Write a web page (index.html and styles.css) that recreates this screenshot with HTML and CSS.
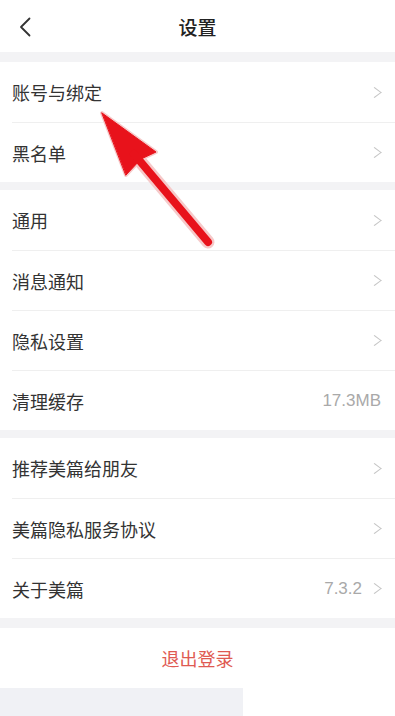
FILE: index.html
```html
<!DOCTYPE html>
<html lang="zh-CN">
<head>
<meta charset="utf-8">
<title>设置</title>
<link rel="stylesheet" href="styles.css">
</head>
<body>
<div class="page">
  <header class="topbar">
    <span class="back">
      <svg width="12" height="20" viewBox="0 0 12 20"><polyline points="10.5,1.5 2,10 10.5,18.5" fill="none" stroke="#333" stroke-width="1.8" stroke-linecap="round" stroke-linejoin="round"/></svg>
    </span>
    <h1 class="title">设置</h1>
  </header>

  <section class="group first">
    <div class="row"><span class="label">账号与绑定</span><span class="chev"></span></div>
    <div class="row"><span class="label">黑名单</span><span class="chev"></span></div>
  </section>

  <section class="group">
    <div class="row"><span class="label">通用</span><span class="chev"></span></div>
    <div class="row"><span class="label">消息通知</span><span class="chev"></span></div>
    <div class="row"><span class="label">隐私设置</span><span class="chev"></span></div>
    <div class="row"><span class="label">清理缓存</span><span class="value">17.3MB</span></div>
  </section>

  <section class="group">
    <div class="row"><span class="label">推荐美篇给朋友</span><span class="chev"></span></div>
    <div class="row"><span class="label">美篇隐私服务协议</span><span class="chev"></span></div>
    <div class="row"><span class="label">关于美篇</span><span class="value with-chev">7.3.2</span><span class="chev"></span></div>
  </section>

  <section class="group logout-group">
    <div class="logout">退出登录</div>
  </section>

  <footer class="bottom">
    <div class="bottom-bar"></div>
  </footer>

  <svg class="arrow" width="395" height="716" viewBox="0 0 395 716">
    <g stroke="#f6c9c9" stroke-width="4" stroke-linejoin="round" stroke-linecap="round" fill="#f6c9c9">
      <polygon points="102,113 156,152 141,159 126,175"/>
      <line x1="134" y1="154" x2="208" y2="242" stroke-width="13"/>
    </g>
    <g fill="#e8121b" stroke="#e8121b" stroke-linejoin="round" stroke-linecap="round">
      <polygon points="102,113 156,152 141,159 126,175" stroke-width="1"/>
      <line x1="134" y1="154" x2="208" y2="242" stroke-width="8"/>
    </g>
  </svg>
</div>
</body>
</html>
```

FILE: styles.css
```css
* { box-sizing: border-box; }

html, body {
  margin: 0;
  padding: 0;
}

body {
  background: #f3f3f5;
  font-family: "Noto Sans CJK SC", "Noto Sans", sans-serif;
  color: #333;
}

.page {
  position: relative;
  width: 395px;
  height: 716px;
  overflow: hidden;
  background: #f3f3f5;
}

.topbar {
  height: 52px;
  background: #fff;
  display: flex;
  align-items: center;
  justify-content: center;
  position: relative;
}

.back {
  position: absolute;
  left: 19px;
  top: 17px;
  display: flex;
}

.title {
  margin: 0;
  font-size: 19px;
  font-weight: 500;
  color: #222;
  letter-spacing: 0;
}

.group {
  background: #fff;
  margin-top: 8px;
}

.group.first {
  margin-top: 10px;
}

.row {
  height: 60px;
  margin-left: 12px;
  padding-right: 13px;
  display: flex;
  align-items: center;
}

.row + .row {
  border-top: 1px solid #efefef;
}

.label {
  flex: 1;
  font-size: 18px;
  color: #333;
}

.chev {
  width: 8px;
  height: 13px;
  position: relative;
}

.chev::before {
  content: "";
  position: absolute;
  left: -4px;
  top: 2px;
  width: 8px;
  height: 8px;
  border-top: 1.5px solid #c4c4c4;
  border-right: 1.5px solid #c4c4c4;
  transform: rotate(45deg) skew(-8deg, -8deg);
}

.value {
  font-family: "Liberation Sans", Arial, sans-serif;
  font-size: 17px;
  color: #a9a9a9;
  margin-right: 1px;
}

.value.with-chev {
  margin-right: 12px;
}

.logout-group {
  margin-top: 10px;
}

.logout {
  height: 60px;
  display: flex;
  align-items: center;
  justify-content: center;
  font-size: 18px;
  color: #df5a52;
}

.bottom {
  background: #fff;
  height: 28px;
}

.bottom-bar {
  width: 243px;
  height: 28px;
  background: #f0f1f5;
}

.arrow {
  position: absolute;
  left: 0;
  top: 0;
  pointer-events: none;
}
```
